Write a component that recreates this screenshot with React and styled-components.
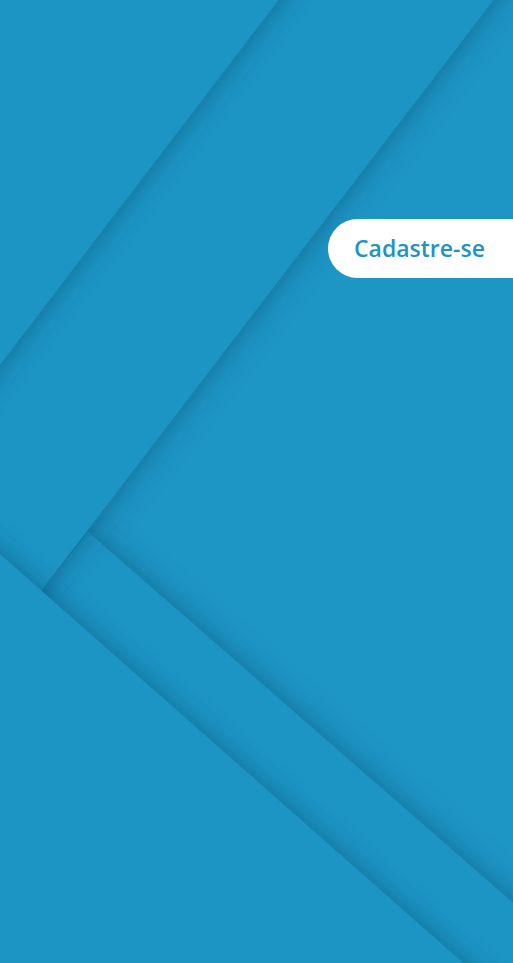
import React from "react";
import styled, { createGlobalStyle } from "styled-components";

const Global = createGlobalStyle`
  html, body { margin: 0; padding: 0; background: #1d95c5; }
  body { font-family: "Open Sans", "Noto Sans", sans-serif; }
  * { box-sizing: border-box; }
`;

const Screen = styled.div`
  display: grid;
  width: 513px;
  height: 963px;
  overflow: hidden;
  background: #1d95c5;
`;

const Backdrop = styled.svg`
  grid-area: 1 / 1;
  width: 513px;
  height: 963px;
  display: block;
`;

const Content = styled.main`
  grid-area: 1 / 1;
  display: flex;
  flex-direction: column;
  align-items: flex-end;
  padding-top: 219px;
`;

const SignUpButton = styled.button`
  height: 59px;
  width: 185px;
  border: none;
  background: #ffffff;
  border-radius: 30px 0 0 30px;
  padding: 0 0 2px 26px;
  text-align: left;
  font-family: "Open Sans", "Noto Sans", sans-serif;
  font-weight: 600;
  font-size: 23px;
  color: #1e93c4;
  cursor: pointer;
`;

const BASE = "#1d95c5";

const Layer = ({ points }) => (
  <polygon points={points} fill={BASE} filter="url(#sh)" />
);

export default function App() {
  return (
    <>
      <Global />
      <Screen>
        <Backdrop viewBox="0 0 513 963" xmlns="http://www.w3.org/2000/svg">
          <defs>
            <filter id="sh" x="-50%" y="-50%" width="200%" height="200%">
              <feDropShadow dx="0" dy="0" stdDeviation="14" floodColor="#003a5c" floodOpacity="0.5" />
            </filter>
          </defs>
          <rect x="0" y="0" width="513" height="963" fill={BASE} />
          <Layer points="88,532 700,1066 700,1400 -600,1400" />
          <Layer points="355,-100 570,-100 -272,1000 -485,1000" />
          <Layer points="-200,-100 355,-100 -485,1000 -200,1000" />
          <Layer points="-100,466 700,1172 700,1400 -100,1400" />
        </Backdrop>
        <Content>
          <SignUpButton>Cadastre-se</SignUpButton>
        </Content>
      </Screen>
    </>
  );
}
